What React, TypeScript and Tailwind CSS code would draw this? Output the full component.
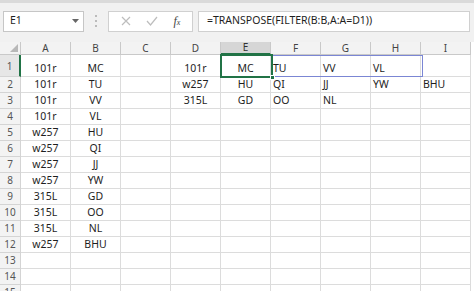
import React from 'react'

const cols = ['A', 'B', 'C', 'D', 'E', 'F', 'G', 'H', 'I']

// cell values, row by row (A..I); centered cols vs left aligned
const data: Record<number, string[]> = {
  1: ['101r', 'MC', '', '101r', 'MC', 'TU', 'VV', 'VL', ''],
  2: ['101r', 'TU', '', 'w257', 'HU', 'QI', 'JJ', 'YW', 'BHU'],
  3: ['101r', 'VV', '', '315L', 'GD', 'OO', 'NL', '', ''],
  4: ['101r', 'VL', '', '', '', '', '', '', ''],
  5: ['w257', 'HU', '', '', '', '', '', '', ''],
  6: ['w257', 'QI', '', '', '', '', '', '', ''],
  7: ['w257', 'JJ', '', '', '', '', '', '', ''],
  8: ['w257', 'YW', '', '', '', '', '', '', ''],
  9: ['315L', 'GD', '', '', '', '', '', '', ''],
  10: ['315L', 'OO', '', '', '', '', '', '', ''],
  11: ['315L', 'NL', '', '', '', '', '', '', ''],
  12: ['w257', 'BHU', '', '', '', '', '', '', ''],
  13: ['', '', '', '', '', '', '', '', ''],
  14: ['', '', '', '', '', '', '', '', ''],
  15: ['', '', '', '', '', '', '', '', ''],
}

const leftCols = [5, 6, 7, 8]

const App = () => {
  const rows = Object.keys(data).map(Number)

  return (
    <div
      className="w-[474px] h-[291px] overflow-hidden bg-[#f1f1f1] text-[10.5px] text-[#1e1e1e]"
      style={{ fontFamily: '"Noto Sans", "Open Sans", sans-serif' }}
    >
      <div className="h-[3px] bg-[#dadada]" />

      {/* formula bar */}
      <div className="flex items-center h-[22px] mt-[7px] pl-[3px] pr-[4px]">
        <div className="flex items-center justify-between w-[81px] h-[21px] bg-white border border-[#c6c6c6] pl-[6px] pr-[4px]">
          <span>E1</span>
          <svg width="7" height="4" viewBox="0 0 7 4">
            <path d="M0 0 L7 0 L3.5 4 Z" fill="#666" />
          </svg>
        </div>
        <div className="flex flex-col gap-[3px] w-[24px] items-center">
          <span className="w-[2px] h-[2px] bg-[#bbb]" />
          <span className="w-[2px] h-[2px] bg-[#bbb]" />
          <span className="w-[2px] h-[2px] bg-[#bbb]" />
        </div>
        <div className="flex items-center justify-around w-[85px] h-[21px] bg-white border border-[#d0d0d0] px-[4px]">
          <svg width="10" height="10" viewBox="0 0 10 10">
            <path d="M1 1 L9 9 M9 1 L1 9" stroke="#bdbdbd" strokeWidth="1.2" />
          </svg>
          <svg width="12" height="10" viewBox="0 0 12 10">
            <path d="M1 5 L4.5 9 L11 1" stroke="#bdbdbd" strokeWidth="1.2" fill="none" />
          </svg>
          <span className="italic text-[#444] text-[12px]" style={{ fontFamily: '"Liberation Serif", serif' }}>
            f<span className="text-[8px]">x</span>
          </span>
        </div>
        <div className="flex-1 h-[21px] ml-[5px] bg-white border border-[#d0d0d0] flex items-center pl-[8px]">
          =TRANSPOSE(FILTER(B:B,A:A=D1))
        </div>
      </div>

      {/* grid */}
      <div className="relative mt-[10px] bg-white">
        <div className="grid grid-cols-[21px_repeat(9,50px)]">
          {/* header row */}
          <div className="h-[13px] bg-[#f3f3f3] border-r border-b border-[#c9c9c9] relative">
            <svg className="absolute right-[2px] bottom-[2px]" width="8" height="8" viewBox="0 0 8 8">
              <path d="M8 0 L8 8 L0 8 Z" fill="#b8b8b8" />
            </svg>
          </div>
          {cols.map((c) => (
            <div
              key={c}
              className={
                c === 'E'
                  ? 'h-[13px] bg-[#d6d6d6] border-r border-[#c9c9c9] border-b-2 border-b-[#217346] flex items-center justify-center text-[10px] text-[#333]'
                  : 'h-[13px] bg-[#f3f3f3] border-r border-b border-[#c9c9c9] flex items-center justify-center text-[10px] text-[#444]'
              }
            >
              {c}
            </div>
          ))}

          {rows.map((r) => (
            <React.Fragment key={r}>
              <div
                className={
                  r === 1
                    ? 'h-[22px] bg-[#e6e6e6] border-r-2 border-r-[#217346] border-b border-[#d4d4d4] flex items-end justify-center pb-[2px] text-[10px] text-[#555]'
                    : 'h-[16px] bg-[#f3f3f3] border-r border-b border-[#d4d4d4] flex items-center justify-center text-[10px] text-[#555]'
                }
              >
                {r}
              </div>
              {data[r].map((v, i) => (
                <div
                  key={i}
                  className={`${r === 1 ? 'h-[22px]' : 'h-[16px]'} border-r border-b border-[#dcdcdc] flex items-end pb-[1px] leading-[13px] ${
                    leftCols.includes(i) ? 'justify-start pl-[2px]' : 'justify-center'
                  }`}
                >
                  {v}
                </div>
              ))}
            </React.Fragment>
          ))}
        </div>

        {/* spill range outline */}
        <div className="absolute left-[271px] top-[13px] w-[152px] h-[22px] border border-[#7b86d4]" />
        {/* active cell */}
        <div className="absolute left-[220px] top-[12px] w-[53px] h-[24px] border-2 border-[#217346]" />
        <div className="absolute left-[270px] top-[33px] w-[5px] h-[5px] bg-[#217346] border border-white" />
      </div>
    </div>
  )
}

export default App
